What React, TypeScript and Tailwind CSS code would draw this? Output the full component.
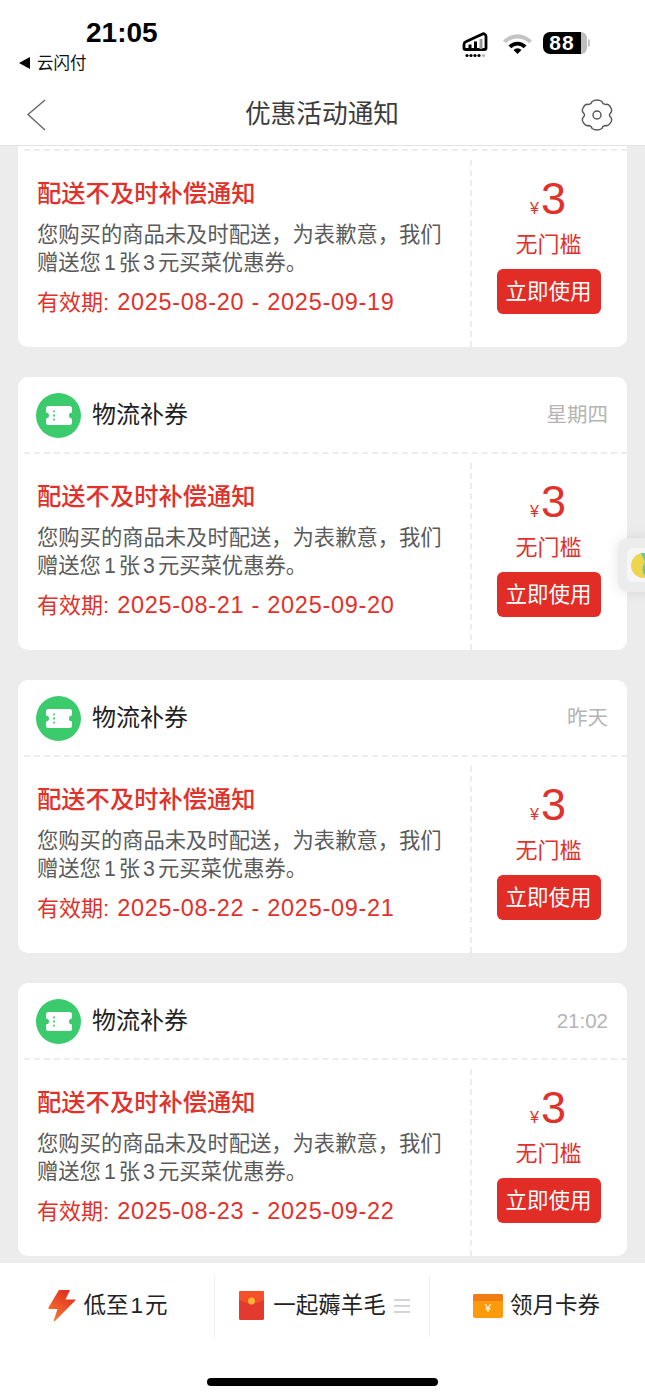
const font = { fontFamily: '"Liberation Sans", "Noto Sans CJK SC", sans-serif' };

const TicketIcon = () => (
  <div className="w-[45px] h-[45px] rounded-full bg-[#3ccb6c] flex items-center justify-center shrink-0">
    <svg width="26" height="19" viewBox="0 0 26 19">
      <path d="M2.500 0h21A2.500 2.500 0 0 1 26 2.500v4a3 3 0 0 0 0 6v4a2.500 2.500 0 0 1-2.500 2.500h-21A2.500 2.500 0 0 1 0 16.500v-4a3 3 0 0 0 0-6v-4A2.500 2.500 0 0 1 2.500 0z" fill="#fff" />
      <path d="M8 4.500v1.800M8 8.600v1.800M8 12.700v1.800" stroke="#3ccb6c" strokeWidth="1.800" />
    </svg>
  </div>
);

const CouponBody = ({ dates }: { dates: string }) => (
  <div className="flex h-[196px]">
    <div className="w-[452px] pl-[19px] pt-[27px]">
      <div className="text-[24.300px] leading-[32px] font-medium text-[#e0312a] whitespace-nowrap">配送不及时补偿通知</div>
      <div className="mt-[11px] text-[21.300px] leading-[28px] text-[#5a5a5a] whitespace-nowrap">
        <div>您购买的商品未及时配送，为表歉意，我们</div>
        <div>
          赠送您<span className="mx-[3px]">1</span>张<span className="mx-[3px]">3</span>元买菜优惠券。
        </div>
      </div>
      <div className="mt-[10px] text-[22px] leading-[30px] text-[#e0312a] whitespace-nowrap flex items-baseline">
        有效期:<span className="ml-[8px] text-[23.500px] tracking-[0.7px]">{dates}</span>
      </div>
    </div>
    <div className="flex-1 mt-[9px] border-l-2 border-dashed border-[#ececec] flex flex-col items-center pt-[14px] pr-[2px]">
      <div className="flex items-baseline text-[#e0312a] h-[50px] -ml-[1px]">
        <span className="text-[16px] leading-[20px] mr-[2px]">¥</span>
        <span className="text-[45px] leading-[50px]">3</span>
      </div>
      <div className="mt-[6px] text-[22px] leading-[30px] text-[#e0312a]">无门槛</div>
      <div className="mt-[9px] w-[104px] h-[45px] pt-[2px] rounded-[6px] bg-[#e12d26] text-white text-[21.500px] flex items-center justify-center">立即使用</div>
    </div>
  </div>
);

const Coupon = ({ day, dates }: { day: string; dates: string }) => (
  <div className="mt-[30px] bg-white rounded-[10px]">
    <div className="h-[77px] ml-[6px] pl-[12px] pr-[19px] pt-[1px] flex items-center border-b-2 border-dashed border-[#ececec]">
      <TicketIcon />
      <span className="ml-[11px] text-[24px] text-[#222]">物流补券</span>
      <span className="ml-auto text-[20.500px] text-[#b5b5b5]">{day}</span>
    </div>
    <CouponBody dates={dates} />
  </div>
);

export default function App() {
  return (
    <div className="relative w-[645px] h-[1398px] overflow-hidden bg-[#ececec] flex flex-col" style={font}>
      <div className="bg-white h-[146px] shrink-0 border-b border-[#e3e3e3] flex flex-col">
        <div className="h-[84px] flex">
          <div className="pl-[17px] pt-[17px] w-[180px]">
            <div className="pl-[69px] text-[28px] leading-[32px] font-bold text-black">21:05</div>
            <div className="flex items-center mt-[3px] text-[16.500px] leading-[22px] text-[#111]">
              <span className="w-0 h-0 border-y-[6px] border-y-transparent border-r-[11px] border-r-black mr-[7px] ml-[2px]"></span>
              云闪付
            </div>
          </div>
          <div className="ml-auto pr-[55px] pt-[32px] flex items-start">
            <svg width="26" height="28" viewBox="0 0 26 28" className="mr-[15px]">
              <path d="M2 16v-3.500a3 3 0 0 1 1.800-2.700L20 2.300A2.500 2.500 0 0 1 24 4.500V16a1.500 1.500 0 0 1-1.500 1.500h-19A1.500 1.500 0 0 1 2 16z" fill="none" stroke="#000" strokeWidth="2.800" />
              <path d="M6.500 17v-4.500h3V17zM12 17v-7.500h3V17z" fill="#000" />
              <path d="M17.500 17V7h3v10z" fill="#9a9a9a" />
              <circle cx="5" cy="23.500" r="1.600" fill="#000" />
              <circle cx="9" cy="23.500" r="1.600" fill="#000" />
              <circle cx="13" cy="23.500" r="1.600" fill="#000" />
              <circle cx="17" cy="23.500" r="1.600" fill="#000" />
              <circle cx="21.500" cy="23.500" r="1.600" fill="#b5b5b5" />
            </svg>
            <svg width="29" height="21" viewBox="0 0 29 21" className="mr-[11px] mt-[1px]">
              <path d="M0 7.500a20 20 0 0 1 29 0l-2.800 2.800a16.500 16.500 0 0 0-23.400 0z" fill="#c4c4c4" />
              <path d="M5.500 12.500a12.500 12.500 0 0 1 18 0l-2.800 2.700a8.500 8.500 0 0 0-12.400 0z" fill="#000" />
              <path d="M10.500 17a5.500 5.500 0 0 1 8 0L14.500 21z" fill="#000" />
            </svg>
            <div className="flex items-center">
              <div className="w-[38px] h-[22px] rounded-l-[7px] bg-black text-white text-[21px] font-bold leading-[22px] text-center tracking-[1px]">88</div>
              <div className="w-[6px] h-[22px] rounded-r-[7px] bg-[#bdbdbd]"></div>
              <div className="ml-[1px] w-[2px] h-[8px] rounded-r bg-[#c4c4c4]"></div>
            </div>
          </div>
        </div>
        <div className="flex-1 flex items-center">
          <svg width="24" height="34" viewBox="0 0 24 34" className="ml-[24px]">
            <path d="M21 2 L4 16.500 L21 32" fill="none" stroke="#666" strokeWidth="1.400" />
          </svg>
          <div className="flex-1 text-center text-[25.700px] text-[#3c3c3c] pl-[16px]">优惠活动通知</div>
          <svg width="34" height="34" viewBox="0 0 34 34" className="mr-[31px]">
            <path d="M12 3.500 Q17 0.500 22 3.500 Q22.500 6.500 26 6.500 Q28.500 5.500 31 10 Q32.500 13 30.500 15 Q28.500 17 30.500 19 Q32.500 21 31 24 Q28.500 28.500 26 27.500 Q22.500 27.500 22 30.500 Q17 33.500 12 30.500 Q11.500 27.500 8 27.500 Q5.500 28.500 3 24 Q1.500 21 3.500 19 Q5.500 17 3.500 15 Q1.500 13 3 10 Q5.500 5.500 8 6.500 Q11.500 6.500 12 3.500z" fill="none" stroke="#555" strokeWidth="1.400" />
            <circle cx="17" cy="17" r="4" fill="none" stroke="#555" strokeWidth="1.400" />
          </svg>
        </div>
      </div>

      <div className="flex-1 overflow-hidden px-[18px]">
        <div className="bg-white rounded-b-[10px] pt-[3px]">
          <div className="ml-[6px] border-b-2 border-dashed border-[#ececec]"></div>
          <CouponBody dates="2025-08-20 - 2025-09-19" />
        </div>
        <Coupon day="星期四" dates="2025-08-21 - 2025-09-20" />
        <Coupon day="昨天" dates="2025-08-22 - 2025-09-21" />
        <Coupon day="21:02" dates="2025-08-23 - 2025-09-22" />
      </div>

      <div className="bg-white h-[135px] shrink-0 relative">
        <div className="h-[84px] flex items-center pt-[1px]">
          <div className="w-[215px] h-[62px] flex items-center justify-center border-r border-[#f0f0f0]">
            <svg width="28" height="32" viewBox="0 0 28 32" className="mr-[7px] ml-[2px]">
              <defs>
                <linearGradient id="bolt" x1="0.800" y1="0" x2="0.200" y2="1">
                  <stop offset="0" stopColor="#e02a20" />
                  <stop offset="1" stopColor="#f77a30" />
                </linearGradient>
              </defs>
              <path d="M10 1.500q.300-1.500 2-1.500h10l-4.500 9.500H27q1 0 .3 1L7 31q-1.500 1-1.200-.8L9.500 19H1.500q-1.500 0-1-1.500z" fill="url(#bolt)" />
            </svg>
            <span className="text-[22.500px] text-[#222]">
              低至<span className="mx-[2px]">1</span>元
            </span>
          </div>
          <div className="w-[215px] h-[62px] flex items-center justify-center border-r border-[#f0f0f0]">
            <svg width="25" height="29" viewBox="0 0 25 29" className="mr-[9px] ml-[5px]">
              <rect width="25" height="29" rx="1.500" fill="#e33a2f" />
              <path d="M0 1.500A1.500 1.500 0 0 1 1.500 0h22A1.500 1.500 0 0 1 25 1.500V9q-12.500 7-25 0z" fill="#f4502a" />
              <circle cx="12.500" cy="10" r="3.500" fill="#f9b233" />
            </svg>
            <span className="text-[22.500px] text-[#222]">一起薅羊毛</span>
            <span className="ml-[8px] w-[16px] flex flex-col gap-[4px]">
              <span className="h-[2px] bg-[#d4d4d4]"></span>
              <span className="h-[2px] bg-[#d4d4d4]"></span>
              <span className="h-[2px] bg-[#d4d4d4]"></span>
            </span>
          </div>
          <div className="flex-1 h-[62px] flex items-center justify-center">
            <div className="w-[30px] h-[24px] rounded-[2px] bg-[#fb9a0c] mr-[7px] -ml-[2px] relative flex items-center justify-center text-white text-[11px]">
              <div className="absolute top-0 inset-x-0 h-[7px] rounded-t-[2px] bg-[#f17c13]"></div>
              <span className="mt-[6px]">¥</span>
            </div>
            <span className="text-[22.500px] text-[#222]">领月卡券</span>
          </div>
        </div>
        <div className="absolute left-[207px] top-[115px] w-[231px] h-[8px] rounded-full bg-black"></div>
      </div>

      <div className="absolute left-[618px] top-[538px] w-[40px] h-[54px] rounded-[10px] bg-[#ececec] shadow-[0_0_14px_rgba(0,0,0,0.1)] flex items-center pl-[9px]">
        <div className="w-[30px] h-[34px] rounded-[6px] bg-[#f6f6f6] flex items-center pl-[4px] shrink-0">
          <svg width="25" height="25" viewBox="0 0 25 25" className="shrink-0">
            <circle cx="12.500" cy="12.500" r="12.500" fill="#eed54d" />
            <path d="M10 0 L18 0 L14 9z" fill="#63c9a0" />
            <path d="M14 9 L25 9 V23 L14 23 Q9 17 14 9z" fill="#63c9a0" />
          </svg>
        </div>
      </div>
    </div>
  );
}
